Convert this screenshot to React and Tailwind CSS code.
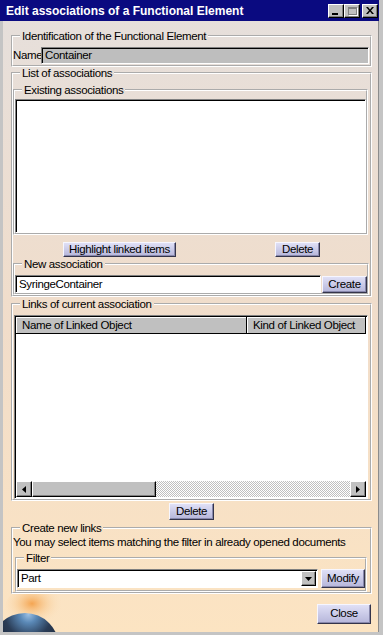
import React from "react";

// etched group frame, like the old Motif/Windows group box
function Group({ label, className = "", children }) {
  return (
    <fieldset className={`min-w-0 border-2 border-white [border-style:groove] ${className}`}>
      <legend className="ml-[7px] px-[2px] leading-[14px] whitespace-nowrap">{label}</legend>
      {children}
    </fieldset>
  );
}

function Btn({ children, className = "" }) {
  return (
    <div
      className={`flex items-center justify-center whitespace-nowrap border border-t-[#f6f6ff] border-l-[#f6f6ff] border-b-[#34344a] border-r-[#34344a] bg-gradient-to-b from-[#e0e0f6] to-[#b6b6da] shadow-[inset_-1px_-1px_0_#8888ac] leading-none ${className}`}
    >
      {children}
    </div>
  );
}

function Sunken({ className = "", children }) {
  return (
    <div
      className={`border border-t-[#808080] border-l-[#808080] border-b-white border-r-white shadow-[inset_1px_1px_0_#000] ${className}`}
    >
      {children}
    </div>
  );
}

function Raised({ className = "", children }) {
  return (
    <div
      className={`flex items-center justify-center bg-[#c0c0c0] border border-t-white border-l-white border-b-black border-r-black shadow-[inset_-1px_-1px_0_#808080] ${className}`}
    >
      {children}
    </div>
  );
}

function TitleButtons() {
  return (
    <div className="ml-auto flex items-center">
      <Raised className="w-[16px] h-[14px]">
        <div className="w-[6px] h-[2px] bg-black mt-[6px] -ml-[2px]" />
      </Raised>
      <Raised className="w-[16px] h-[14px]">
        <div className="w-[9px] h-[8px] border border-[#808080] border-t-2 shadow-[1px_1px_0_#fff]" />
      </Raised>
      <Raised className="w-[16px] h-[14px] ml-[2px]">
        <svg width="8" height="7" viewBox="0 0 8 7">
          <path d="M0 0h2l2 2.5L6 0h2L5 3.5 8 7H6L4 4.5 2 7H0l3-3.5z" fill="#000" />
        </svg>
      </Raised>
    </div>
  );
}

function Planet() {
  return (
    <svg className="absolute left-0 bottom-0" width="80" height="42" viewBox="0 0 80 42">
      <defs>
        <radialGradient id="glow" cx="0.45" cy="0.4" r="0.5">
          <stop offset="0" stopColor="#f39a3e" stopOpacity="0.85" />
          <stop offset="0.5" stopColor="#f7bd78" stopOpacity="0.4" />
          <stop offset="1" stopColor="#fbe0bc" stopOpacity="0" />
        </radialGradient>
        <radialGradient id="ball" cx="0.55" cy="0.02" r="0.9">
          <stop offset="0" stopColor="#9cc0e4" />
          <stop offset="0.14" stopColor="#5a88b6" />
          <stop offset="0.38" stopColor="#2a3c56" />
          <stop offset="1" stopColor="#0c1018" />
        </radialGradient>
      </defs>
      <ellipse cx="32" cy="18" rx="30" ry="22" fill="url(#glow)" />
      <circle cx="22" cy="57" r="34" fill="url(#ball)" />
    </svg>
  );
}

export default function App() {
  return (
    <div className="w-[383px] h-[635px] overflow-hidden flex flex-col bg-[#c4c4c4] text-[11.5px] tracking-[-0.35px] text-black font-['Liberation_Sans',Arial,sans-serif]">
      {/* Title bar */}
      <div className="h-[21px] mr-[4px] bg-[#0a0a80] flex items-center pl-[6px] pr-[1px] shrink-0 tracking-normal">
        <span className="font-bold text-[12px] text-white leading-none">
          Edit associations of a Functional Element
        </span>
        <TitleButtons />
      </div>

      {/* Dialog body */}
      <div className="relative flex-1 flex flex-col ml-[3px] mr-[4px] mb-[3px] pl-[8px] pr-[6px] border-r border-r-[#8c8c8c] bg-gradient-to-b from-[#e6dfdb] via-[#f1ddca] to-[#fce4c2] overflow-hidden">
        <Planet />

        <Group label="Identification of the Functional Element" className="mt-[8px] relative">
          <div className="flex items-center pt-[4px] pb-[1px] pr-[1px]">
            <span className="w-[28px] shrink-0 whitespace-nowrap leading-[17px]">Name</span>
            <div className="flex-1 h-[17px] bg-[#bebebe] border border-t-[#808080] border-l-[#808080] border-b-white border-r-white shadow-[inset_1px_1px_0_#000] pl-[3px] leading-[15px]">
              Container
            </div>
          </div>
        </Group>

        <Group label="List of associations" className="-mt-[1px] relative">
          <div className="flex flex-col pr-[2px]">
            <Group label="Existing associations" className="mt-[3px]">
              <Sunken className="mt-[2px] h-[134px] bg-white" />
            </Group>
            <div className="flex h-[15px] mt-[7px]">
              <Btn className="ml-[50px] w-[113px]">Highlight linked items</Btn>
              <Btn className="ml-[99px] w-[45px]">Delete</Btn>
            </div>
            <Group label="New association" className="-mr-[1px]">
              <div className="flex pt-[4px] h-[22px]">
                <Sunken className="w-[306px] h-[18px] bg-white pl-[3px] leading-[16px]">
                  SyringeContainer
                </Sunken>
                <Btn className="ml-[1px] flex-1 h-[17px] mt-[1px]">Create</Btn>
              </div>
            </Group>
          </div>
        </Group>

        <Group label="Links of current association" className="relative">
          <div className="pt-[4px] pl-[1px] pr-[2px]">
            <Sunken className="h-[184px] flex flex-col bg-white p-[1px]">
              <div className="flex h-[17px] shrink-0 whitespace-nowrap">
                <div className="w-[231px] bg-[#c0c0c0] border-r border-b border-black shadow-[inset_1px_1px_0_#fff] pl-[6px] leading-[16px]">
                  Name of Linked Object
                </div>
                <div className="flex-1 bg-[#c0c0c0] border-r border-b border-black shadow-[inset_1px_1px_0_#fff] pl-[6px] leading-[16px]">
                  Kind of Linked Object
                </div>
              </div>
              <div className="flex-1" />
              <div className="flex h-[16px] shrink-0">
                <Raised className="w-[16px] h-[16px]">
                  <svg width="4" height="7" viewBox="0 0 4 7">
                    <path d="M4 0v7L0 3.5z" fill="#000" />
                  </svg>
                </Raised>
                <Raised className="w-[124px] h-[16px]" />
                <div className="flex-1 bg-[repeating-conic-gradient(#c0c0c0_0%_25%,#ffffff_0%_50%)] bg-[length:2px_2px]" />
                <Raised className="w-[16px] h-[16px]">
                  <svg width="4" height="7" viewBox="0 0 4 7">
                    <path d="M0 0v7l4-3.5z" fill="#000" />
                  </svg>
                </Raised>
              </div>
            </Sunken>
          </div>
        </Group>

        <div className="flex justify-center mt-[2px]">
          <Btn className="w-[45px] h-[17px]">Delete</Btn>
        </div>

        <Group label="Create new links" className="mt-[1px] relative">
          <div className="leading-[14px] whitespace-nowrap">
            You may select items matching the filter in already opened documents
          </div>
          <Group label="Filter" className="mt-[2px] ml-[2px] mr-[3px]">
            <div className="flex pt-[4px] pb-[2px]">
              <Sunken className="w-[301px] h-[19px] bg-white flex items-center pl-[3px] pr-[1px]">
                <span className="flex-1 leading-[17px]">Part</span>
                <Raised className="w-[15px] h-[15px]">
                  <svg width="7" height="4" viewBox="0 0 7 4">
                    <path d="M0 0h7L3.5 4z" fill="#000" />
                  </svg>
                </Raised>
              </Sunken>
              <Btn className="ml-[3px] flex-1 h-[19px]">Modify</Btn>
            </div>
          </Group>
        </Group>

        <Btn className="relative self-end mr-[1px] mt-[10px] w-[54px] h-[20px]">Close</Btn>
      </div>
    </div>
  );
}
